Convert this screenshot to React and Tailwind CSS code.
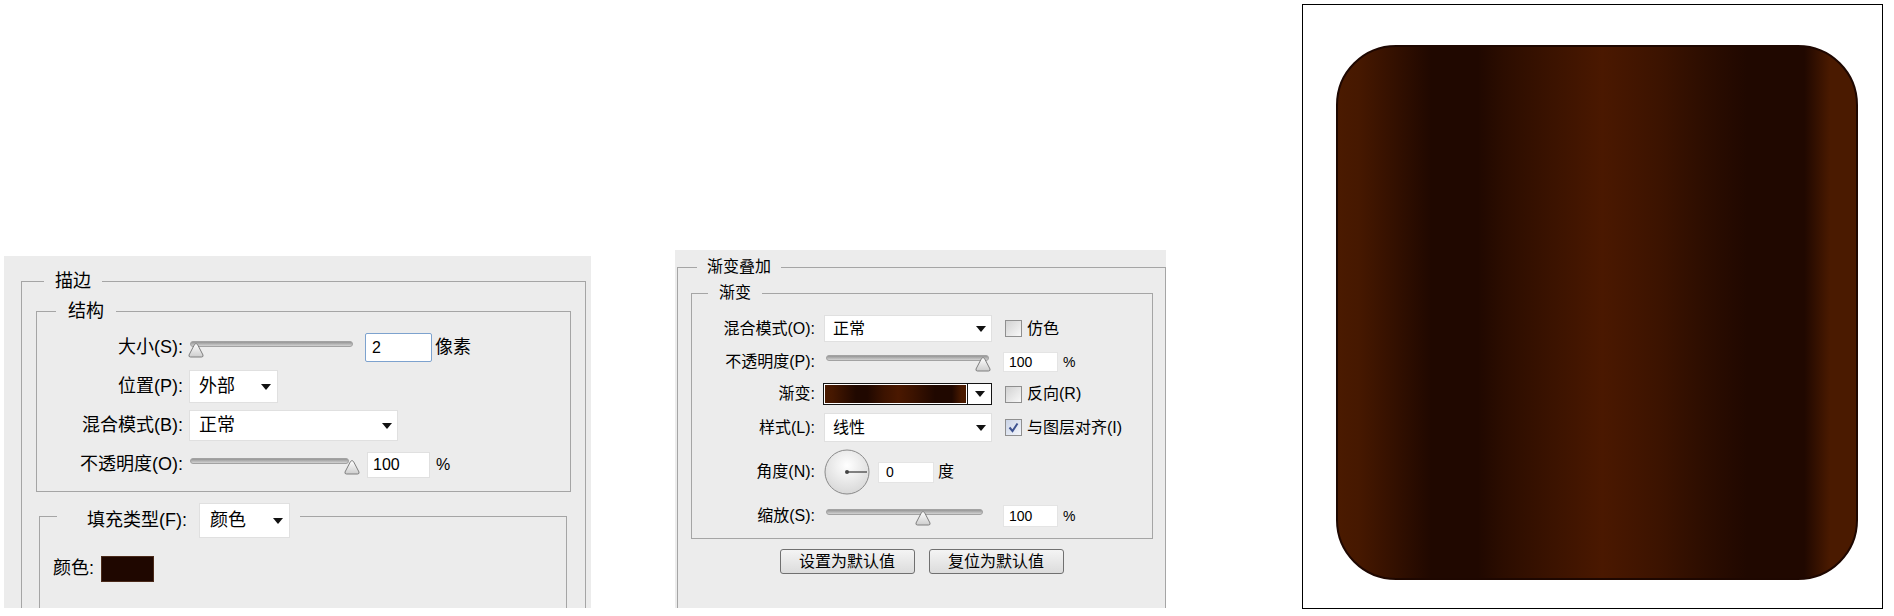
import React from 'react';

const Arrow = () => (
    <svg width="10" height="6" viewBox="0 0 10 6">
        <path d="M0 0h10L5 6z" fill="#111" />
    </svg>
);

const Slider = ({ width, trackEnd, thumb }) => (
    <svg width={width} height="20" viewBox={`0 0 ${width} 20`}>
        <defs>
            <linearGradient id="trk" x1="0" y1="0" x2="0" y2="1">
                <stop offset="0" stopColor="#8e8e8e" />
                <stop offset="1" stopColor="#dadada" />
            </linearGradient>
            <linearGradient id="thm" x1="0" y1="0" x2="0" y2="1">
                <stop offset="0" stopColor="#ffffff" />
                <stop offset="1" stopColor="#cdcdcd" />
            </linearGradient>
        </defs>
        <rect x="2.5" y="3.5" width={trackEnd - 2} height="5" rx="2.5" fill="url(#trk)" stroke="#a2a2a2" />
        <path
            transform={`translate(${thumb},0)`}
            d="M1 17 L6.5 6.5 Q8 4.5 9.5 6.5 L15 17 Q15.5 19 13.5 19 L2.5 19 Q0.5 19 1 17 Z"
            fill="url(#thm)"
            stroke="#7e7e7e"
        />
    </svg>
);

const Check = ({ checked }) => (
    <div className={`w-[17px] h-[17px] border border-[#8f8f8f] flex items-center justify-center ${checked ? 'bg-[linear-gradient(135deg,#c9d3e6,#f4f6fb)]' : 'bg-[linear-gradient(135deg,#d2d2d2,#f8f8f8)]'}`}>
        {checked && (
            <svg width="13" height="13" viewBox="0 0 13 13">
                <path d="M2.5 6.5 L5.5 10 L10.5 2.5" fill="none" stroke="#3d5290" strokeWidth="2" />
            </svg>
        )}
    </div>
);

const Dial = () => (
    <svg width="46" height="46" viewBox="0 0 46 46">
        <defs>
            <radialGradient id="dial" cx="0.5" cy="0.35" r="0.65">
                <stop offset="0" stopColor="#ffffff" />
                <stop offset="1" stopColor="#d8d8d8" />
            </radialGradient>
        </defs>
        <circle cx="23" cy="23" r="22" fill="url(#dial)" stroke="#8a8a8a" />
        <line x1="23" y1="23" x2="43" y2="23" stroke="#5a5a5a" strokeWidth="1.5" />
        <circle cx="23" cy="23" r="2" fill="#444" />
    </svg>
);

const StrokePanel = () => (
    <div className="w-[587px] h-[352px] mt-[256px] ml-[4px] shrink-0 bg-[#ececec] overflow-hidden pt-[13px] pl-[17px] pr-[5px] text-[18px] text-black">
        <fieldset className="border border-[#a5a5a5] h-[420px]">
            <legend className="ml-[22px] px-[11px] leading-[24px]">描边</legend>

            <fieldset className="mt-[6px] mx-[14px] border border-[#a5a5a5] pt-[8px] pb-[10px]">
                <legend className="ml-[19px] px-[12px] leading-[24px]">结构</legend>
                <div className="flex flex-col gap-[6px]">
                    <div className="flex items-center h-[33px]">
                        <span className="w-[146px] text-right">大小(S):</span>
                        <div className="ml-[5px] flex"><Slider width={172} trackEnd={164} thumb={0} /></div>
                        <div className="ml-[5px] w-[67px] h-[29px] bg-white border border-[#7da2ce] rounded-[2px] flex items-center pl-[6px] text-[16px]">2</div>
                        <span className="ml-[3px]">像素</span>
                    </div>
                    <div className="flex items-center h-[33px]">
                        <span className="w-[146px] text-right">位置(P):</span>
                        <div className="ml-[6px] w-[89px] h-[33px] bg-white border border-[#e0e0e0] flex items-center justify-between pl-[9px] pr-[6px]">
                            <span>外部</span>
                            <Arrow />
                        </div>
                    </div>
                    <div className="flex items-center h-[33px]">
                        <span className="w-[146px] text-right">混合模式(B):</span>
                        <div className="ml-[6px] w-[209px] h-[31px] bg-white border border-[#e0e0e0] flex items-center justify-between pl-[9px] pr-[5px]">
                            <span>正常</span>
                            <Arrow />
                        </div>
                    </div>
                    <div className="flex items-center h-[33px]">
                        <span className="w-[146px] text-right">不透明度(O):</span>
                        <div className="ml-[5px] flex"><Slider width={172} trackEnd={160} thumb={156} /></div>
                        <div className="ml-[7px] w-[63px] h-[26px] bg-white border border-[#e0e0e0] flex items-center pl-[5px] text-[16px]">100</div>
                        <span className="ml-[6px] text-[16px]">%</span>
                    </div>
                </div>
            </fieldset>

            <fieldset className="mt-[2px] ml-[17px] mr-[18px] border border-[#a5a5a5] h-[200px]">
                <legend className="ml-[17px] pl-[30px] pr-[10px]">
                    <div className="h-[44px] flex items-end">
                        <span className="h-[35px] flex items-center">填充类型(F):</span>
                        <div className="ml-[12px] w-[91px] h-[35px] bg-white border border-[#e0e0e0] flex items-center justify-between pl-[10px] pr-[6px]">
                            <span>颜色</span>
                            <Arrow />
                        </div>
                    </div>
                </legend>
                <div className="flex items-center pl-[13px] mt-[17px]">
                    <span>颜色:</span>
                    <div className="ml-[7px] w-[53px] h-[26px] bg-[#1f0700] border border-[#4a2a1a]" />
                </div>
            </fieldset>
        </fieldset>
    </div>
);

const GradientPanel = () => (
    <div className="w-[491px] h-[358px] mt-[250px] ml-[84px] shrink-0 bg-[#ececec] overflow-hidden pt-[6px] pl-[2px] text-[16px] text-black">
        <fieldset className="border border-[#a5a5a5] h-[420px]">
            <legend className="ml-[19px] px-[10px] leading-[22px]">渐变叠加</legend>

            <fieldset className="mt-[4px] ml-[13px] mr-[12px] border border-[#a5a5a5] pt-[9px] pb-[3px]">
                <legend className="ml-[16px] px-[11px] leading-[22px]">渐变</legend>

                <div className="flex items-center h-[31px]">
                    <span className="w-[123px] text-right">混合模式(O):</span>
                    <div className="ml-[9px] w-[168px] h-[27px] bg-white border border-[#e0e0e0] flex items-center justify-between pl-[8px] pr-[5px]">
                        <span>正常</span>
                        <Arrow />
                    </div>
                    <div className="ml-[13px]"><Check /></div>
                    <span className="ml-[5px]">仿色</span>
                </div>

                <div className="flex items-center h-[36px]">
                    <span className="w-[123px] text-right">不透明度(P):</span>
                    <div className="ml-[9px] flex"><Slider width={168} trackEnd={164} thumb={151} /></div>
                    <div className="ml-[11px] w-[55px] h-[20px] bg-white border border-[#e4e4e4] flex items-center pl-[5px] text-[14px]">100</div>
                    <span className="ml-[5px] text-[14px]">%</span>
                </div>

                <div className="flex items-center h-[28px]">
                    <span className="w-[123px] text-right">渐变:</span>
                    <div className="ml-[8px] w-[169px] h-[22px] border border-[#151515] flex bg-white">
                        <div className="flex-1 m-[1px] bg-[linear-gradient(90deg,#4a1a00_0%,#461800_5%,#200800_22%,#200800_30%,#3c1300_42%,#4a1800_52%,#3c1300_62%,#200800_78%,#200800_90%,#4a1a00_97%,#4a1a00_100%)]" />
                        <div className="w-[24px] border-l border-[#151515] flex items-center justify-center">
                            <Arrow />
                        </div>
                    </div>
                    <div className="ml-[13px]"><Check /></div>
                    <span className="ml-[5px]">反向(R)</span>
                </div>

                <div className="flex items-center h-[39px]">
                    <span className="w-[123px] text-right">样式(L):</span>
                    <div className="ml-[9px] w-[168px] h-[29px] bg-white border border-[#e0e0e0] flex items-center justify-between pl-[8px] pr-[5px]">
                        <span>线性</span>
                        <Arrow />
                    </div>
                    <div className="ml-[13px]"><Check checked /></div>
                    <span className="ml-[5px]">与图层对齐(I)</span>
                </div>

                <div className="flex items-center h-[50px]">
                    <span className="w-[123px] text-right">角度(N):</span>
                    <div className="ml-[9px] flex"><Dial /></div>
                    <div className="ml-[8px] w-[56px] h-[21px] bg-white border border-[#e4e4e4] flex items-center pl-[7px] text-[14px]">0</div>
                    <span className="ml-[4px]">度</span>
                </div>

                <div className="flex items-center h-[38px]">
                    <span className="w-[123px] text-right">缩放(S):</span>
                    <div className="ml-[9px] flex"><Slider width={168} trackEnd={158} thumb={91} /></div>
                    <div className="ml-[11px] w-[55px] h-[22px] bg-white border border-[#e4e4e4] flex items-center pl-[5px] text-[14px]">100</div>
                    <span className="ml-[5px] text-[14px]">%</span>
                </div>
            </fieldset>

            <div className="mt-[10px] flex justify-center gap-[14px]">
                <button className="w-[135px] h-[25px] border border-[#707070] rounded-[3px] bg-[linear-gradient(180deg,#f4f4f4,#dcdcdc)] text-[16px] leading-none">设置为默认值</button>
                <button className="w-[135px] h-[25px] border border-[#707070] rounded-[3px] bg-[linear-gradient(180deg,#f4f4f4,#dcdcdc)] text-[16px] leading-none">复位为默认值</button>
            </div>
        </fieldset>
    </div>
);

const Preview = () => (
    <div className="ml-[136px] mt-[4px] w-[581px] h-[605px] shrink-0 border border-black bg-white pl-[33px] pt-[40px]">
        <div className="w-[522px] h-[535px] rounded-[60px] border-2 border-[#1e0700] bg-[linear-gradient(90deg,#4a1a00_0%,#461800_4%,#200800_18%,#200800_27%,#2c0d00_32%,#3c1300_42%,#4a1800_51%,#3c1300_62%,#2c0d00_71%,#200800_79%,#200800_90%,#4a1a00_95%,#4a1a00_100%)]" />
    </div>
);

const App = () => {
    return (
        <div className="w-[1894px] h-[616px] overflow-hidden bg-white flex items-start font-['Liberation_Sans','Noto_Sans_CJK_SC',sans-serif]">
            <StrokePanel />
            <GradientPanel />
            <Preview />
        </div>
    );
};

export default App;
